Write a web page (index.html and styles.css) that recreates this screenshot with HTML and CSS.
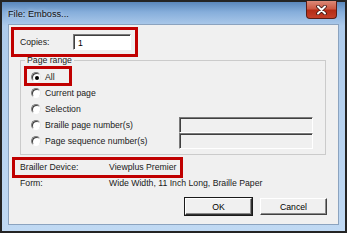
FILE: index.html
```html
<!DOCTYPE html>
<html lang="en">
<head>
  <meta charset="UTF-8" />
  <title>File: Emboss...</title>
  <link rel="stylesheet" href="styles.css">
</head>
<body>

  <div class="window">
    <div class="titlebar">
      <span class="title">File: Emboss...</span>
      <button class="close" title="Close">
        <svg width="11" height="10" viewBox="0 0 11 10">
          <path d="M2 1.5 L9 8.5 M9 1.5 L2 8.5" stroke="#3a1410" stroke-width="3.6" stroke-linecap="round" />
          <path d="M2 1.5 L9 8.5 M9 1.5 L2 8.5" stroke="#fff" stroke-width="2" stroke-linecap="round" />
        </svg>
      </button>
    </div>

    <div class="client">
      <div class="copies-row">
        <label for="copies" class="copies-label">Copies:</label>
        <input type="text" id="copies" class="field" value="1">
      </div>

      <fieldset class="group">
        <legend>Page range</legend>
        <div class="option"><span class="radio checked"></span><span>All</span></div>
        <div class="option"><span class="radio"></span><span>Current page</span></div>
        <div class="option"><span class="radio"></span><span>Selection</span></div>
        <div class="option"><span class="radio"></span><span>Braille page number(s)</span><input type="text" class="field field-disabled" disabled></div>
        <div class="option"><span class="radio"></span><span>Page sequence number(s)</span><input type="text" class="field field-disabled" disabled></div>
      </fieldset>

      <div class="info-row"><span class="info-label">Brailler Device:</span><span>Viewplus Premier</span></div>
      <div class="info-row"><span class="info-label">Form:</span><span>Wide Width, 11 Inch Long, Braille Paper</span></div>

      <div class="buttons">
        <button class="btn btn-default">OK</button>
        <button class="btn">Cancel</button>
      </div>
    </div>

    <!-- red highlight marks drawn over the dialog -->
    <div class="mark mark-copies"></div>
    <div class="mark mark-all"></div>
    <div class="mark mark-device"></div>
  </div>

</body>
</html>
```

FILE: styles.css
```css
* {
  box-sizing: border-box;
}
body {
  margin: 0;
  padding: 0;
  background: #1e1e1e;
  font-family: 'Liberation Sans', Arial, sans-serif;
  font-size: 8.7px;
  color: #1a1a1a;
}
.window {
  position: relative;
  width: 347px;
  height: 233px;
  border: 2px solid #242424;
  padding: 0 6px 6px 6px;
  display: flex;
  flex-direction: column;
  background: linear-gradient(to bottom, #5a87bb 0, #86aedb 10px, #aecbeb 24px, #c0d9f3 100%);
}
.titlebar {
  height: 22px;
  display: flex;
  align-items: center;
  justify-content: space-between;
}
.title {
  font-size: 9.2px;
  color: #111;
  padding-top: 1px;
  text-shadow: 0 0 4px rgba(255,255,255,0.8);
}
.close {
  align-self: flex-start;
  margin-top: -1px;
  margin-right: 2px;
  width: 31px;
  height: 18px;
  padding: 0;
  border: 1px solid #5a1d16;
  border-top: none;
  border-radius: 0 0 4px 4px;
  background: linear-gradient(to bottom, #dc8a78 0, #cc5a44 45%, #b42c16 55%, #c4402a 100%);
  display: flex;
  align-items: center;
  justify-content: center;
}
.client {
  flex: 1;
  background: #f0f0f0;
  border: 1px solid #8ba3bf;
  padding: 9px 12px 0 11px;
}
.copies-row {
  display: flex;
  align-items: center;
  height: 16px;
}
.copies-label {
  width: 53px;
}
.field {
  height: 16px;
  border: 1px solid;
  border-color: #7a7a7a #ffffff #ffffff #7a7a7a;
  box-shadow: inset 1px 1px 0 #404040;
  background: #fff;
  font-family: 'Liberation Sans', Arial, sans-serif;
  font-size: 8.7px;
  color: #000;
  padding: 1px 3px 0 4px;
  margin: 0;
  border-radius: 0;
}
#copies {
  width: 58px;
}
.field-disabled {
  background: #f0f0f0;
  width: 134px;
}
.group {
  margin: 5px 0 0 0;
  padding: 3px 12px 5px 10px;
  border: 1px solid #cbcbcb;
}
.group legend {
  margin-left: -6px;
  padding: 0 2px;
  line-height: 11px;
}
.option {
  display: grid;
  grid-template-columns: 10px 130px 134px;
  column-gap: 4px;
  align-items: center;
  height: 16px;
}
.radio {
  width: 10px;
  height: 10px;
  border-radius: 50%;
  border: 1px solid;
  border-color: #7d7d7d #e6e6e6 #ffffff #7d7d7d;
  box-shadow: inset 1px 1px 0 #3c3c3c;
  background: #fff;
  position: relative;
}
.radio.checked::after {
  content: '';
  position: absolute;
  left: 2.5px;
  top: 2.5px;
  width: 4px;
  height: 4px;
  border-radius: 50%;
  background: #000;
}
.info-row {
  display: flex;
  align-items: center;
  height: 16px;
}
.group + .info-row {
  margin-top: 4px;
}
.info-label {
  width: 89px;
}
.buttons {
  display: flex;
  justify-content: flex-end;
  gap: 8px;
  margin-top: 7px;
  margin-right: -1px;
}
.btn {
  width: 67px;
  height: 17px;
  padding: 0;
  border: 1px solid;
  border-color: #ffffff #404040 #404040 #ffffff;
  box-shadow: inset -1px -1px 0 #8a8a8a;
  background: #f0f0f0;
  font-family: 'Liberation Sans', Arial, sans-serif;
  font-size: 8.7px;
  color: #000;
}
.btn-default {
  outline: 1px solid #1a1a1a;
  outline-offset: 0;
  border-color: #ffffff #303030 #303030 #ffffff;
}
.mark {
  position: absolute;
  border: 3px solid #c00000;
}
.mark-copies {
  left: 9px;
  top: 25px;
  width: 127px;
  height: 30px;
}
.mark-all {
  left: 22px;
  top: 64px;
  width: 48px;
  height: 20px;
}
.mark-device {
  left: 10px;
  top: 155px;
  width: 171px;
  height: 21px;
}
```
